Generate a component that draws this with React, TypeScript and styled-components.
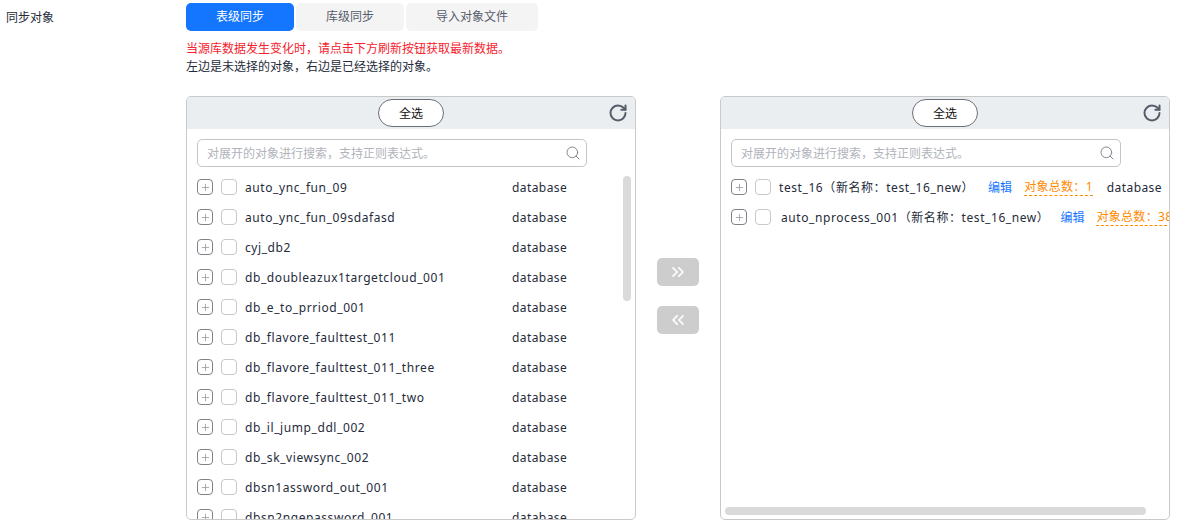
import React from 'react';
import styled, { createGlobalStyle } from 'styled-components';
import { ChevronsLeft, ChevronsRight, Plus, RotateCw, Search } from 'lucide-react';

const GlobalStyle = createGlobalStyle`
  html, body {
    margin: 0;
    padding: 0;
    height: 527px;
    overflow: hidden;
    background: #fff;
    font-family: "Noto Sans", "Noto Sans CJK SC", sans-serif;
    font-size: 12px;
    color: #252b3a;
  }
`;

const Page = styled.div`
  display: flex;
  padding-top: 3px;
`;

const FieldLabel = styled.div`
  width: 180px;
  padding: 7px 0 0 6px;
  line-height: 16px;
  color: #252b3a;
`;

const Field = styled.div`
  display: flex;
  flex-direction: column;
`;

const Tabs = styled.div`
  display: flex;
  gap: 2px;
`;

const Tab = styled.div<{ $active?: boolean; $width: number }>`
  width: ${p => p.$width}px;
  height: 28px;
  line-height: 28px;
  text-align: center;
  border-radius: 5px;
  background: ${p => (p.$active ? '#1476ff' : '#f4f4f4')};
  color: ${p => (p.$active ? '#fff' : '#575d6c')};
`;

const Hints = styled.div`
  margin-top: 9px;
  line-height: 18px;
`;

const Hint = styled.div<{ $warn?: boolean }>`
  color: ${p => (p.$warn ? '#f5222d' : '#252b3a')};
`;

const Shuttle = styled.div`
  display: flex;
  margin-top: 20px;
`;

const Panel = styled.div`
  position: relative;
  width: 450px;
  height: 424px;
  box-sizing: border-box;
  border: 1px solid #c9c9c9;
  border-radius: 5px;
  overflow: hidden;
`;

const PanelHead = styled.div`
  position: relative;
  height: 32px;
  display: flex;
  align-items: center;
  justify-content: center;
  background: #ebeef0;
`;

const SelectAll = styled.button`
  width: 66px;
  height: 28px;
  padding: 0;
  border: 1px solid #6b6f78;
  border-radius: 14px;
  background: #fff;
  color: #111;
  font: inherit;
`;

const Refresh = styled.span`
  position: absolute;
  right: 7px;
  top: 6px;
  display: flex;
  color: #565d6b;
`;

const SearchBox = styled.div`
  margin: 10px 0 0 10px;
  width: 390px;
  height: 28px;
  box-sizing: border-box;
  display: flex;
  align-items: center;
  justify-content: space-between;
  padding: 0 5px 0 9px;
  border: 1px solid #c4c4c4;
  border-radius: 5px;
  color: #b0b3ba;
  svg {
    color: #80858f;
  }
`;

const Rows = styled.div`
  margin-top: 5px;
`;

const Row = styled.div`
  display: flex;
  align-items: center;
  height: 30px;
  padding-left: 10px;
  white-space: nowrap;
`;

const Expander = styled.span`
  flex: none;
  width: 16px;
  height: 16px;
  box-sizing: border-box;
  display: flex;
  align-items: center;
  justify-content: center;
  border: 1px solid #7f8289;
  border-radius: 4px;
  color: #8f9299;
`;

const Check = styled.span`
  flex: none;
  width: 16px;
  height: 16px;
  box-sizing: border-box;
  margin-left: 8px;
  border: 1px solid #c8c8c8;
  border-radius: 4px;
`;

const RowName = styled.span<{ $width?: number; $gap?: number }>`
  margin-left: ${p => p.$gap ?? 8}px;
  ${p => (p.$width ? `width: ${p.$width}px;` : '')}
  letter-spacing: 0.58px;
`;

const RowType = styled.span`
  letter-spacing: 0.42px;
`;

const EditLink = styled.span<{ $gap: number }>`
  margin-left: ${p => p.$gap}px;
  color: #1476ff;
`;

const Count = styled.span`
  margin: 0 14px 0 12px;
  height: 16px;
  line-height: 16px;
  color: #ff8a00;
  border-bottom: 1px dashed #ff8a00;
  letter-spacing: 0.3px;
`;

const VThumb = styled.div`
  position: absolute;
  right: 4px;
  top: 79px;
  width: 8px;
  height: 125px;
  border-radius: 4px;
  background: #dadada;
`;

const HThumb = styled.div`
  position: absolute;
  left: 4px;
  bottom: 4px;
  width: 421px;
  height: 8px;
  border-radius: 4px;
  background: #dadada;
`;

const Movers = styled.div`
  width: 84px;
  display: flex;
  flex-direction: column;
  align-items: center;
  gap: 20px;
  padding-top: 162px;
`;

const Mover = styled.div`
  width: 42px;
  height: 28px;
  display: flex;
  align-items: center;
  justify-content: center;
  border-radius: 5px;
  background: #cdcdcd;
  color: #fff;
`;

const sourceRows = [
  'auto_ync_fun_09',
  'auto_ync_fun_09sdafasd',
  'cyj_db2',
  'db_doubleazux1targetcloud_001',
  'db_e_to_prriod_001',
  'db_flavore_faulttest_011',
  'db_flavore_faulttest_011_three',
  'db_flavore_faulttest_011_two',
  'db_il_jump_ddl_002',
  'db_sk_viewsync_002',
  'dbsn1assword_out_001',
  'dbsn2ngepassword_001',
];

const PanelTop: React.FC = () => (
  <>
    <PanelHead>
      <SelectAll>全选</SelectAll>
      <Refresh>
        <RotateCw size={20} strokeWidth={2.4} />
      </Refresh>
    </PanelHead>
    <SearchBox>
      对展开的对象进行搜索，支持正则表达式。
      <Search size={16} strokeWidth={1.5} />
    </SearchBox>
  </>
);

const RowStart: React.FC = () => (
  <>
    <Expander>
      <Plus size={11} strokeWidth={1.6} />
    </Expander>
    <Check />
  </>
);

const App: React.FC = () => {
  return (
    <Page>
      <GlobalStyle />
      <FieldLabel>同步对象</FieldLabel>
      <Field>
        <Tabs>
          <Tab $active $width={108}>表级同步</Tab>
          <Tab $width={108}>库级同步</Tab>
          <Tab $width={132}>导入对象文件</Tab>
        </Tabs>
        <Hints>
          <Hint $warn>当源库数据发生变化时，请点击下方刷新按钮获取最新数据。</Hint>
          <Hint>左边是未选择的对象，右边是已经选择的对象。</Hint>
        </Hints>
        <Shuttle>
          <Panel>
            <PanelTop />
            <Rows>
              {sourceRows.map(name => (
                <Row key={name}>
                  <RowStart />
                  <RowName $width={267}>{name}</RowName>
                  <RowType>database</RowType>
                </Row>
              ))}
            </Rows>
            <VThumb />
          </Panel>
          <Movers>
            <Mover>
              <ChevronsRight size={20} strokeWidth={2} />
            </Mover>
            <Mover>
              <ChevronsLeft size={20} strokeWidth={2} />
            </Mover>
          </Movers>
          <Panel>
            <PanelTop />
            <Rows>
              <Row>
                <RowStart />
                <RowName>test_16（新名称：test_16_new）</RowName>
                <EditLink $gap={14}>编辑</EditLink>
                <Count>对象总数：1</Count>
                <RowType>database</RowType>
              </Row>
              <Row>
                <RowStart />
                <RowName $gap={10}>auto_nprocess_001（新名称：test_16_new）</RowName>
                <EditLink $gap={11}>编辑</EditLink>
                <Count>对象总数：38</Count>
                <RowType>database</RowType>
              </Row>
            </Rows>
            <HThumb />
          </Panel>
        </Shuttle>
      </Field>
    </Page>
  );
};

export default App;
